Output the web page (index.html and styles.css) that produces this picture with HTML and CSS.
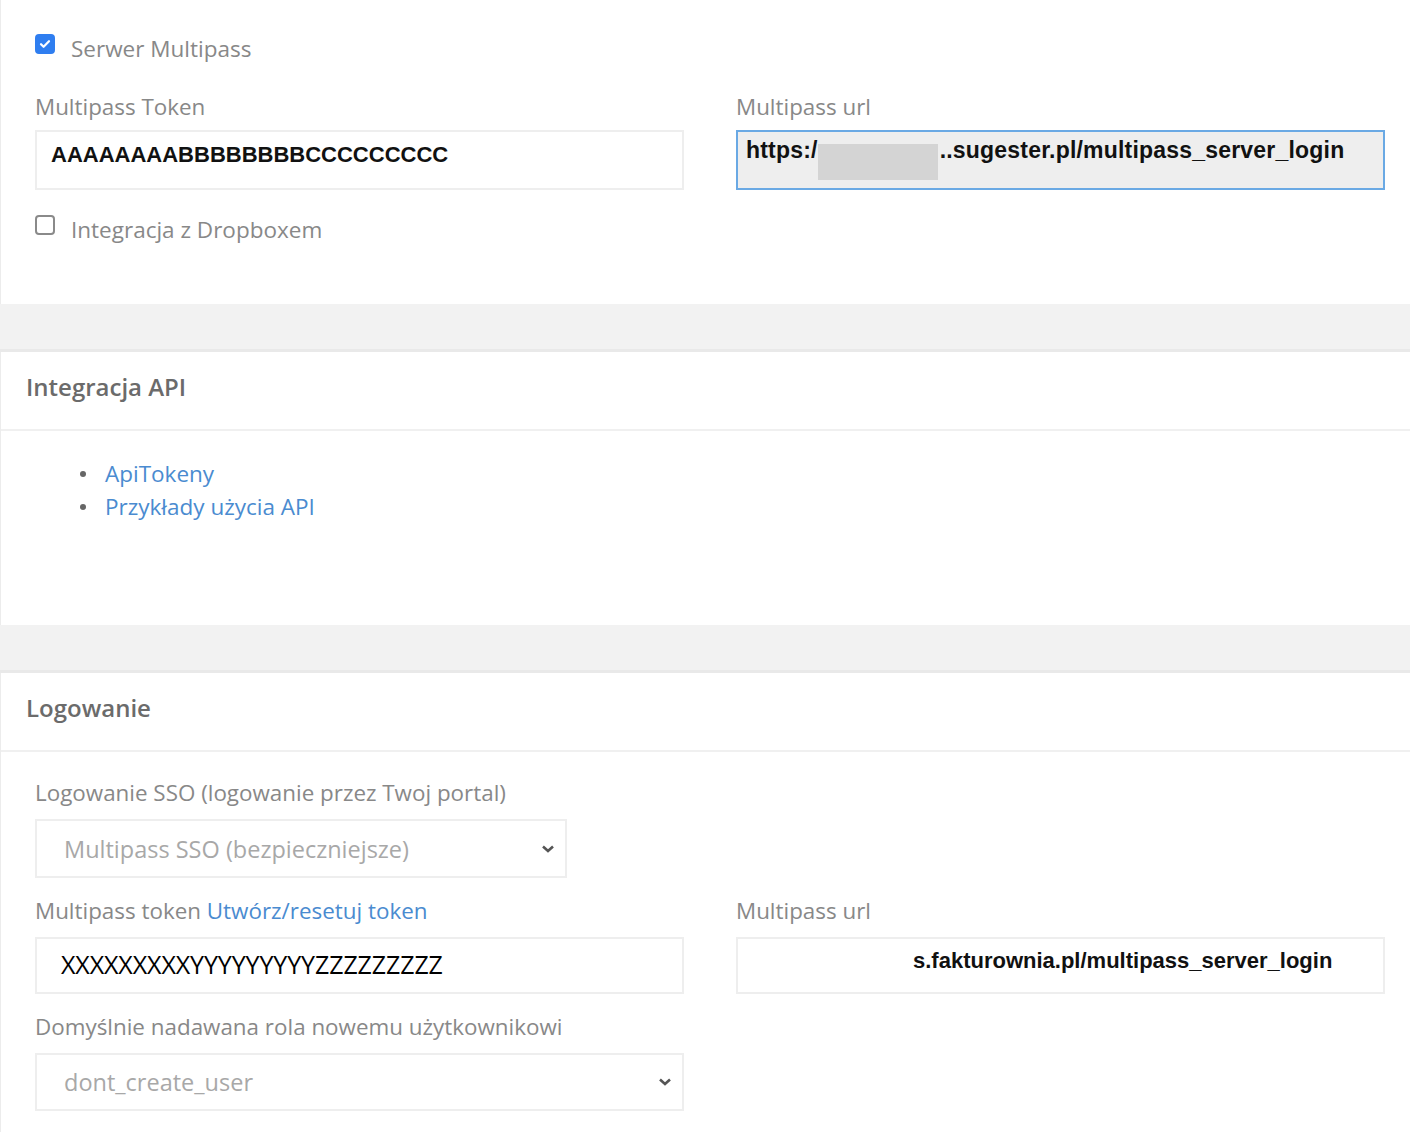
FILE: index.html
```html
<!DOCTYPE html>
<html lang="pl">

<head>
  <meta charset="UTF-8">
  <title>Ustawienia konta</title>
  <link rel="stylesheet" href="styles.css">
</head>

<body>
  <div class="panel panel-first">
    <div class="panel-body multipass-body">
      <label class="check-row">
        <span class="checkbox checked">
          <svg width="14" height="14" viewBox="0 0 14 14"><path d="M3 7.2l2.6 2.6L11 4.2" fill="none" stroke="#fff" stroke-width="2.2" stroke-linecap="round" stroke-linejoin="round"/></svg>
        </span>
        Serwer Multipass
      </label>

      <div class="row">
        <div class="field">
          <div class="field-label">Multipass Token</div>
          <div class="input token">AAAAAAAABBBBBBBBCCCCCCCCC</div>
        </div>
        <div class="field">
          <div class="field-label">Multipass url</div>
          <div class="input url readonly">https:/<span class="redact"></span>..sugester.pl/multipass_server_login</div>
        </div>
      </div>

      <label class="check-row dropbox">
        <span class="checkbox"></span>
        Integracja z Dropboxem
      </label>
    </div>
  </div>

  <div class="band"></div>

  <div class="panel">
    <div class="panel-heading">Integracja API</div>
    <div class="panel-body api-body">
      <ul class="links">
        <li><a href="#">ApiTokeny</a></li>
        <li><a href="#">Przykłady użycia API</a></li>
      </ul>
    </div>
  </div>

  <div class="band"></div>

  <div class="panel">
    <div class="panel-heading">Logowanie</div>
    <div class="panel-body login-body">
      <div class="field half">
        <div class="field-label">Logowanie SSO (logowanie przez Twoj portal)</div>
        <div class="select sso">
          <span>Multipass SSO (bezpieczniejsze)</span>
          <svg width="14" height="10" viewBox="0 0 14 10"><path d="M2 2.5l5 4.5 5-4.5" fill="none" stroke="#555" stroke-width="2.6"/></svg>
        </div>
      </div>

      <div class="row">
        <div class="field">
          <div class="field-label">Multipass token <a href="#">Utwórz/resetuj token</a></div>
          <div class="input token-os">XXXXXXXXXYYYYYYYYYZZZZZZZZZ</div>
        </div>
        <div class="field">
          <div class="field-label">Multipass url</div>
          <div class="input url hidden-start">s.fakturownia.pl/multipass_server_login</div>
        </div>
      </div>

      <div class="field">
        <div class="field-label">Domyślnie nadawana rola nowemu użytkownikowi</div>
        <div class="select role">
          <span>dont_create_user</span>
          <svg width="14" height="10" viewBox="0 0 14 10"><path d="M2 2.5l5 4.5 5-4.5" fill="none" stroke="#555" stroke-width="2.6"/></svg>
        </div>
      </div>
    </div>
  </div>
</body>

</html>
```

FILE: styles.css
```css
body {
  margin: 0;
  padding: 0;
  background-color: #fff;
  font-family: "Open Sans", Arial, sans-serif;
  color: #888;
}

a {
  color: #4a8bd0;
  text-decoration: none;
}

.panel {
  border-left: 1px solid #ececec;
  background-color: #fff;
}

.band {
  height: 45px;
  background-color: #f2f2f2;
  border-bottom: 3px solid #e9e9e9;
}

.panel-heading {
  height: 79px;
  padding: 0 0 8px 25px;
  box-sizing: border-box;
  display: flex;
  align-items: center;
  font-size: 24px;
  font-weight: 600;
  color: #6b6b6b;
  border-bottom: 2px solid #f0f0f0;
}

.panel-body {
  padding: 0 25px 0 34px;
}

.multipass-body {
  padding-top: 34px;
  padding-bottom: 61px;
}

.check-row {
  display: flex;
  align-items: center;
  gap: 16px;
  height: 28px;
  font-size: 22.5px;
  color: #888;
}

.check-row.dropbox {
  margin-top: 25px;
}

.checkbox {
  flex: none;
  width: 20px;
  height: 20px;
  box-sizing: border-box;
  border: 2px solid #8a8a8a;
  border-radius: 4px;
  display: flex;
  align-items: center;
  justify-content: center;
  margin-top: -8px;
}

.checkbox.checked {
  background-color: #2f7ef0;
  border-color: #2f7ef0;
}

.row {
  display: grid;
  grid-template-columns: 649px 649px;
  column-gap: 52px;
}

.field-label {
  font-size: 22.4px;
  line-height: 30px;
  margin-top: 30px;
  margin-bottom: 8px;
  white-space: nowrap;
}

.input,
.select {
  box-sizing: border-box;
  height: 60px;
  border: 2px solid #eeeeee;
  background-color: #fff;
  color: #111;
}

.input.token {
  display: flex;
  align-items: center;
  padding: 0 0 10px 14px;
  font-family: "Liberation Sans", Arial, sans-serif;
  font-weight: bold;
  font-size: 22px;
}

.input.url {
  font-family: "Liberation Sans", Arial, sans-serif;
  font-weight: bold;
  font-size: 23px;
  letter-spacing: 0.2px;
  white-space: nowrap;
  overflow: hidden;
}

.input.readonly {
  background-color: #eeeeee;
  border: 2px solid #6aa9e4;
  padding: 3px 0 0 8px;
  line-height: 30px;
}

.redact {
  display: inline-block;
  width: 120px;
  height: 36px;
  background-color: #d4d4d4;
  vertical-align: top;
  margin: 9px 2px 0 0;
}

.input.hidden-start {
  padding: 8px 0 0 175px;
  line-height: 28px;
  font-size: 22px;
  letter-spacing: 0;
}

.input.token-os {
  display: flex;
  align-items: center;
  padding: 0 0 4px 24px;
  font-size: 25px;
  color: #000;
  letter-spacing: -0.1px;
}

.api-body {
  padding-top: 26px;
  padding-bottom: 102px;
}

.links {
  margin: 0;
  padding-left: 45px;
  list-style: none;
  font-size: 22.5px;
  line-height: 33px;
}

.links li {
  display: flex;
  align-items: center;
}

.links li::before {
  content: "";
  width: 6px;
  height: 6px;
  border-radius: 50%;
  background-color: #666;
  margin-right: 19px;
}

.login-body {
  padding-bottom: 22px;
}

.login-body .field-label {
  margin-top: 18px;
  margin-bottom: 11px;
}

.login-body > .field:first-child .field-label {
  margin-top: 26px;
}

.half {
  width: 532px;
}

.select {
  height: 59px;
  display: flex;
  align-items: center;
  justify-content: space-between;
  padding: 0 10px 0 27px;
  font-size: 23.5px;
  color: #a8a8a8;
}

.login-body .input {
  height: 57px;
}

.select.role {
  width: 649px;
  height: 58px;
}
```
